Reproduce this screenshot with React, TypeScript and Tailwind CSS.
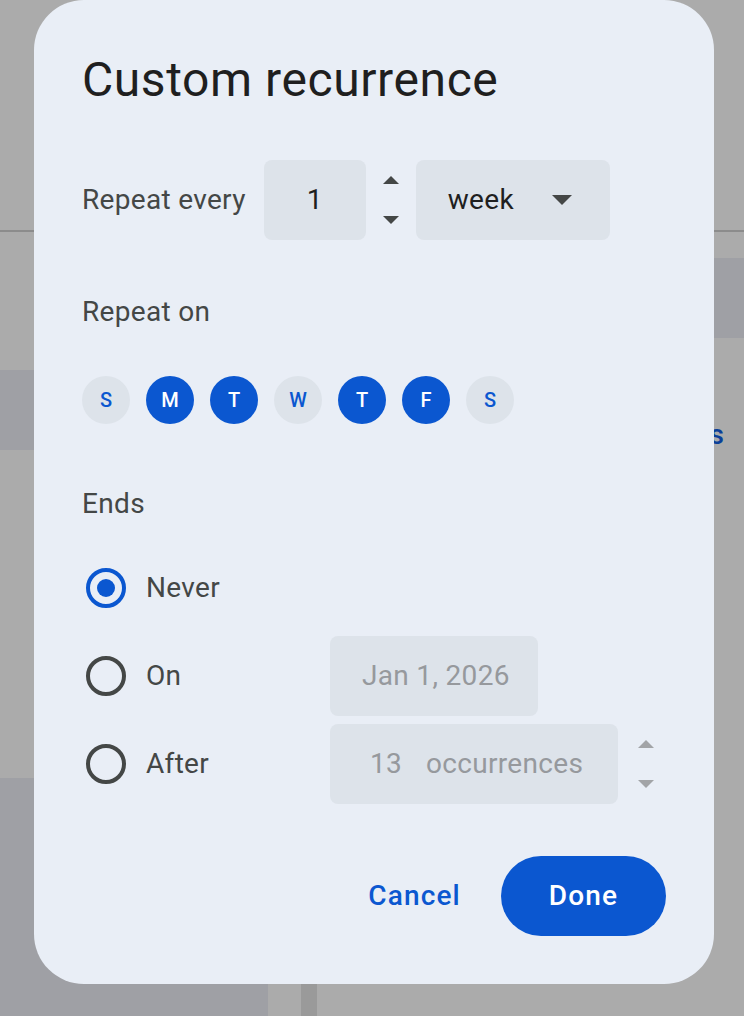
import React, { useState } from 'react';

const days = [
  { key: 'su', label: 'S', on: false },
  { key: 'mo', label: 'M', on: true },
  { key: 'tu', label: 'T', on: true },
  { key: 'we', label: 'W', on: false },
  { key: 'th', label: 'T', on: true },
  { key: 'fr', label: 'F', on: true },
  { key: 'sa', label: 'S', on: false },
];

const Up = ({ color }: { color: string }) => (
  <svg width="16" height="8" viewBox="0 0 16 8">
    <polygon points="0,8 8,0 16,8" fill={color} />
  </svg>
);

const Down = ({ color }: { color: string }) => (
  <svg width="16" height="8" viewBox="0 0 16 8">
    <polygon points="0,0 16,0 8,8" fill={color} />
  </svg>
);

const Spinner = ({ color }: { color: string }) => (
  <div className="flex flex-col items-center gap-8">
    <Up color={color} />
    <Down color={color} />
  </div>
);

const Radio = ({ checked }: { checked: boolean }) => (
  <div className="flex size-12 items-center justify-center">
    <div
      className={`flex size-10 items-center justify-center rounded-full border-4 ${
        checked ? 'border-[#0b57d0]' : 'border-[#444746]'
      }`}
    >
      {checked && <div className="size-[18px] rounded-full bg-[#0b57d0]" />}
    </div>
  </div>
);

export default function App() {
  const [selected, setSelected] = useState<Record<string, boolean>>(
    Object.fromEntries(days.map((d) => [d.key, d.on]))
  );
  const [ends, setEnds] = useState<'never' | 'on' | 'after'>('never');

  return (
    <div
      className="relative h-[1016px] w-full overflow-hidden bg-[#ababab]"
      style={{ fontFamily: 'Roboto, "Noto Sans", sans-serif' }}
    >
      {/* page behind the dialog */}
      <div className="flex h-full flex-col">
        <div className="h-[232px] shrink-0 border-b-2 border-[#8c8c8c]" />
        <div className="flex flex-1">
          <div className="flex w-[268px] flex-col">
            <div className="h-[138px]" />
            <div className="h-20 bg-[#9fa0a5]" />
            <div className="h-[328px]" />
            <div className="flex-1 bg-[#9fa0a5]" />
          </div>
          <div className="w-[33px]" />
          <div className="w-4 bg-[#9a9a9a]" />
          <div className="flex flex-1 flex-col">
            <div className="h-[26px]" />
            <div className="h-20 bg-[#9fa0a5]" />
            <div className="mt-[77px] pr-5 text-right text-[28px] leading-10 font-medium text-[#0a3f99]">
              Tasks
            </div>
          </div>
        </div>
      </div>

      {/* dialog */}
      <div className="absolute top-0 left-[34px] w-[680px] rounded-[50px] bg-[#e9eef6] p-12 tracking-[0.02em]">
        <h1 className="h-16 text-[48px] leading-[64px] font-normal tracking-[0.012em] text-[#1f1f1f]">
          Custom recurrence
        </h1>

        <div className="mt-12 flex h-20 items-center">
          <span className="mr-[18px] text-[28px] text-[#444746]">Repeat every</span>
          <div className="flex h-20 w-[102px] items-center justify-center rounded-lg bg-[#dde3ea] text-[28px] text-[#1f1f1f]">
            1
          </div>
          <div className="flex w-[50px] justify-center">
            <Spinner color="#444746" />
          </div>
          <div className="flex h-20 w-[194px] items-center rounded-lg bg-[#dde3ea] pr-6 pl-8">
            <span className="flex-1 text-[28px] text-[#1f1f1f]">week</span>
            <div className="flex size-12 items-center justify-center">
              <svg width="20" height="10" viewBox="0 0 20 10">
                <polygon points="0,0 20,0 10,10" fill="#444746" />
              </svg>
            </div>
          </div>
        </div>

        <div className="mt-12 flex h-12 items-center text-[28px] text-[#444746]">Repeat on</div>

        <div className="mt-10 flex gap-4">
          {days.map((d) => (
            <button
              key={d.key}
              onClick={() => setSelected((s) => ({ ...s, [d.key]: !s[d.key] }))}
              className={`flex size-12 items-center justify-center rounded-full text-[20px] font-medium tracking-normal ${
                selected[d.key] ? 'bg-[#0b57d0] text-white' : 'bg-[#dde3ea] text-[#0b57d0]'
              }`}
            >
              {d.label}
            </button>
          ))}
        </div>

        <div className="mt-14 flex h-12 items-center text-[28px] text-[#444746]">Ends</div>

        <div className="mt-5 flex flex-col gap-2">
          <div className="flex h-20 items-center">
            <button onClick={() => setEnds('never')} className="flex w-[248px] items-center">
              <Radio checked={ends === 'never'} />
              <span className="ml-4 text-[28px] text-[#444746]">Never</span>
            </button>
          </div>
          <div className="flex h-20 items-center">
            <button onClick={() => setEnds('on')} className="flex w-[248px] items-center">
              <Radio checked={ends === 'on'} />
              <span className="ml-4 text-[28px] text-[#444746]">On</span>
            </button>
            <div className="flex h-20 w-[208px] items-center rounded-lg bg-[#dde3ea] pl-8 text-[28px] whitespace-nowrap text-[#96999d]">
              Jan 1, 2026
            </div>
          </div>
          <div className="flex h-20 items-center">
            <button onClick={() => setEnds('after')} className="flex w-[248px] items-center">
              <Radio checked={ends === 'after'} />
              <span className="ml-4 text-[28px] text-[#444746]">After</span>
            </button>
            <div className="flex h-20 w-[288px] items-center rounded-lg bg-[#dde3ea] pl-8 text-[28px] whitespace-nowrap text-[#96999d]">
              <span className="w-12 text-center">13</span>
              <span className="ml-4">occurrences</span>
            </div>
            <div className="ml-5">
              <Spinner color="#a2a4a7" />
            </div>
          </div>
        </div>

        <div className="mt-[52px] flex items-center justify-end gap-4">
          <button className="h-20 rounded-full px-6 text-[28px] font-medium tracking-[0.04em] text-[#0b57d0]">
            Cancel
          </button>
          <button className="h-20 rounded-full bg-[#0b57d0] px-12 text-[28px] font-medium tracking-[0.04em] text-white">
            Done
          </button>
        </div>
      </div>
    </div>
  );
}
